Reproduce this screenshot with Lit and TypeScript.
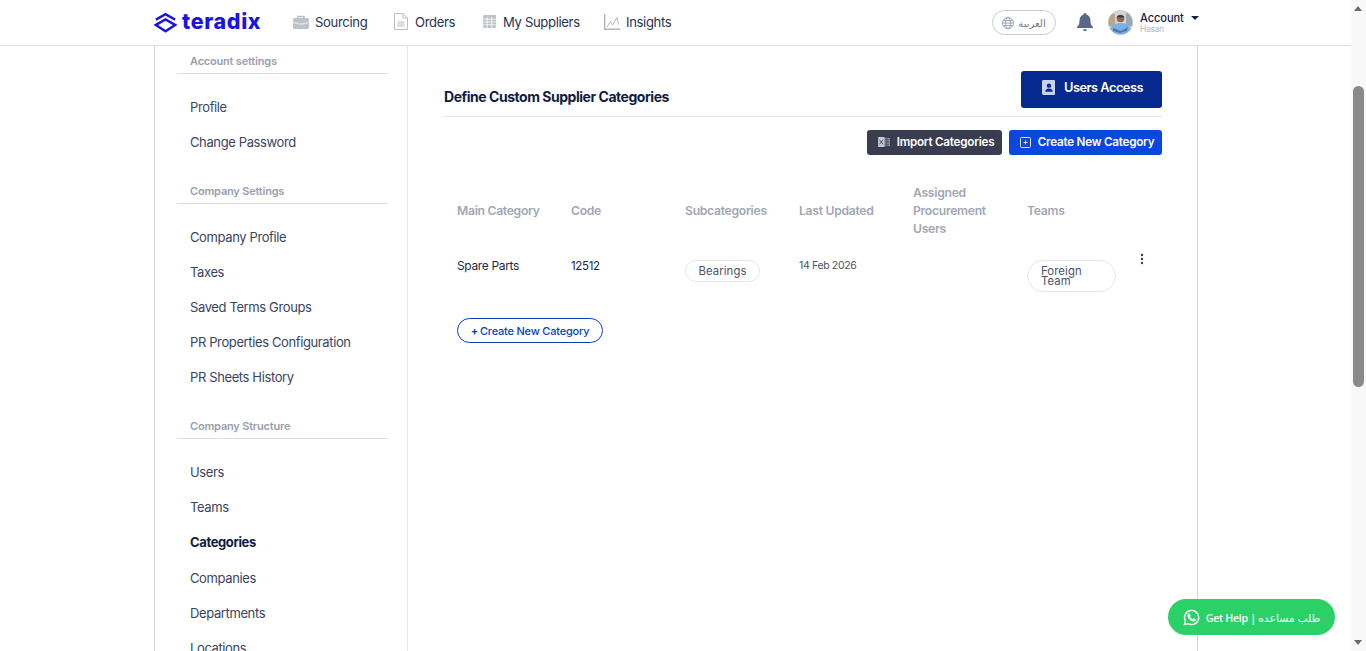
import { LitElement, html, css } from "lit";
import { customElement } from "lit/decorators.js";

const sections = [
  { title: "Account settings", items: ["Profile", "Change Password"] },
  { title: "Company Settings", items: ["Company Profile", "Taxes", "Saved Terms Groups", "PR Properties Configuration", "PR Sheets History"] },
  { title: "Company Structure", items: ["Users", "Teams", "Categories", "Companies", "Departments", "Locations"] },
];

@customElement("app-root")
export class AppRoot extends LitElement {
  static styles = css`
    :host { display: flex; width: 1366px; height: 651px; overflow: hidden; background: #fff; font-family: "Inter", "Liberation Sans", sans-serif; color: #1e2a44; letter-spacing: -0.35px; position: relative; }
    .page { width: 1351px; display: flex; flex-direction: column; height: 651px; }
    .sb { width: 15px; background: #f8f8f8; position: relative; }
    .thumb { position: absolute; left: 2px; width: 11px; top: 86px; height: 301px; background: #8a8a8a; border-radius: 6px; }
    .arr { position: absolute; left: 3px; width: 0; height: 0; border-left: 4.5px solid transparent; border-right: 4.5px solid transparent; }
    .arr.up { top: 6px; border-bottom: 5px solid #6b6b6b; }
    .arr.down { bottom: 6px; border-top: 5px solid #6b6b6b; }

    header { height: 45px; flex: none; border-bottom: 1px solid #dcdde0; display: flex; align-items: center; padding-left: 154px; }
    .logo { display: flex; align-items: center; gap: 5px; width: 139px; color: #1a14e0; }
    .logo span { font-size: 21.5px; font-weight: 800; letter-spacing: 0.65px; line-height: 1; margin-top: -1px; }
    .nav { display: flex; align-items: center; font-size: 13.1px; color: #2a3550; padding-bottom: 2px; }
    .nav a { display: flex; align-items: center; gap: 7px; }
    .nav a:nth-child(1) { width: 101px; gap: 6px; }
    .nav a:nth-child(2) { width: 89px; }
    .nav a:nth-child(3) { width: 121px; }
    .nav a:nth-child(4) { gap: 6px; }
    .right { margin-left: auto; margin-right: 153px; display: flex; align-items: center; }
    .lang { width: 62px; height: 23px; border: 1px solid #c9ccd3; border-radius: 13px; display: flex; align-items: center; justify-content: center; gap: 4px; font-size: 10px; color: #6f7686; margin-right: 21px; }
    .ar { font-family: "Noto Sans", "DejaVu Sans", sans-serif; }
    .bell { margin-right: 15px; display: flex; }
    .avatar { margin-right: 7px; display: flex; }
    .acct { display: flex; flex-direction: column; line-height: 1; width: 58px; padding-top: 2px; }
    .acct b { font-weight: 500; font-size: 11.1px; color: #16213f; display: flex; align-items: center; gap: 7px; letter-spacing: -0.1px; }
    .acct b i { width: 0; height: 0; border-left: 4px solid transparent; border-right: 4px solid transparent; border-top: 4px solid #16213f; margin-top: -2px; }
    .acct small { font-size: 8.5px; color: #b4b8c2; margin-top: 1px; }

    .wrap { flex: 1; min-height: 0; margin-left: 154px; width: 1044px; box-sizing: border-box; border-left: 1px solid #cfd1d5; border-right: 1px solid #cfd1d5; display: flex; overflow: hidden; }
    aside { width: 253px; flex: none; border-right: 1px solid #e6e7ea; box-sizing: border-box; padding: 8px 19px 0 22px; }
    .sec { margin-bottom: 23.6px; }
    .sec h4 { margin: 0; font-size: 11px; font-weight: 600; color: #9aa0ae; padding-left: 13px; height: 19px; line-height: 14px; border-bottom: 1px solid #d9dbdf; letter-spacing: -0.2px; }
    .sec ul { list-style: none; margin: 16px 0 0; padding: 0 0 0 13px; }
    .sec li { height: 35.1px; line-height: 35px; font-size: 13px; color: #3a4560; white-space: nowrap; letter-spacing: -0.38px; }
    .sec:last-child li { height: 35.3px; }
    .sec li.on { font-weight: 700; color: #111c3f; }

    main { flex: 1; padding: 25px 35px 0 36px; min-width: 0; }
    .top { display: flex; align-items: center; justify-content: space-between; border-bottom: 1px solid #e6e7ea; padding-bottom: 8px; height: 37px; }
    .top h2 { margin: 14px 0 0; font-size: 14px; font-weight: 700; color: #111c3f; letter-spacing: -0.47px; }
    .btn { display: flex; align-items: center; justify-content: center; color: #fff; border-radius: 3px; font-weight: 600; }
    .ua { width: 141px; height: 37px; background: #05298f; font-size: 12.8px; gap: 9px; letter-spacing: -0.5px; padding: 0 0 4px 2px; box-sizing: border-box; }
    .actions { display: flex; justify-content: flex-end; gap: 7px; margin-top: 13px; }
    .actions .btn { height: 25px; font-size: 11.7px; gap: 7px; letter-spacing: -0.25px; padding: 0 0 1px 3px; box-sizing: border-box; }
    .imp { width: 135px; background: #3a3c50; }
    .cre { width: 153px; background: #0a47dc; }

    .table { padding-left: 13px; margin-top: 28px; }
    .row { display: grid; grid-template-columns: repeat(6, 114px); }
    .head { font-size: 12.2px; font-weight: 600; color: #a2a7b4; line-height: 18px; align-items: center; height: 56px; letter-spacing: -0.3px; }
    .head > div { padding-right: 24px; white-space: normal; }
    .head > div:nth-child(-n+4) { padding-right: 0; white-space: nowrap; }
    .body { height: 79px; position: relative; font-size: 12px; padding-top: 19px; box-sizing: border-box; color: #1e2a44; }
    .body > div { line-height: 16px; }
    .code { font-size: 11.5px; }
    .d { font-size: 10.5px; color: #4a5268; }
    .pill { display: inline-flex; align-items: center; border: 1px solid #e3e6ea; border-radius: 16px; color: #4a5268; font-size: 11.3px; letter-spacing: 0.1px; box-sizing: border-box; }
    .p1 { width: 75px; height: 22px; justify-content: center; margin-top: 2px; }
    .p2 { width: 89px; height: 32px; padding-left: 13px; line-height: 10px; margin-top: 2px; }
    .kebab { position: absolute; left: 683px; top: 14px; display: flex; }
    .add { width: 146px; height: 25px; box-sizing: border-box; border: 1px solid #0a3fb8; border-radius: 13px; color: #0a3fb8; font-size: 11px; font-weight: 500; display: flex; align-items: center; justify-content: center; gap: 2px; letter-spacing: -0.2px; }

    .wa { position: absolute; left: 1168px; top: 599px; width: 167px; height: 36px; background: #2bd066; border-radius: 18px; color: #fff; display: flex; align-items: center; justify-content: center; gap: 6px; font-size: 10.7px; font-weight: 600; font-family: "Open Sans", "Noto Sans", sans-serif; letter-spacing: -0.35px; }
    .wa .ar { font-size: 10.8px; font-weight: 500; letter-spacing: 0; }
  `;

  render() {
    return html`
      <div class="page">
        <header>
          <div class="logo">
            <svg width="23" height="22" viewBox="0 0 24 22" fill="none" stroke="#1a14e0" stroke-width="2.6"><path d="M2 7.5 L12 1.8 L22 7.5" /><path d="M2 13 L12 7.3 L22 13 L12 19.6 Z" /></svg>
            <span>teradix</span>
          </div>
          <nav class="nav">
            <a><svg width="16" height="14" viewBox="0 0 16 14"><path d="M5 3V1.500h6V3" fill="none" stroke="#b5bac4" stroke-width="1.400"/><rect x="0" y="3" width="16" height="11" rx="1.500" fill="#bcc1ca"/><path d="M0 6.500q8 3.500 16 0v1.500q-8 3.500-16 0z" fill="#dfe1e6"/></svg>Sourcing</a>
            <a><svg width="14" height="17" viewBox="0 0 14 17" fill="none" stroke="#b9bdc6" stroke-width="1"><path d="M.5.5h8.500l4.500 4.500v11.500h-13z"/><path d="M9 .5v4.500h4.500M3.500 9h7M3.500 11h7M3.500 13h7"/></svg>Orders</a>
            <a><svg width="13" height="13" viewBox="0 0 14 14"><rect width="14" height="14" rx="1.500" fill="#bcc1ca"/><path d="M0 4.500h14M0 7.500h14M0 10.500h14M4.500 2v12M9.500 2v12" stroke="#fff" stroke-width=".8"/></svg>My Suppliers</a>
            <a><svg width="16" height="16" viewBox="0 0 16 16" fill="none" stroke="#b0b4be"><path d="M.7 0v15.300H16" stroke-width="1.400"/><path d="M3 13l3.500-5.500 2 3.500L13 3.500l1.500 7" stroke-width="1"/></svg>Insights</a>
          </nav>
          <div class="right">
            <div class="lang"><svg width="12" height="12" viewBox="0 0 12 12" fill="none" stroke="#8d93a1" stroke-width=".8"><circle cx="6" cy="6" r="5.500"/><ellipse cx="6" cy="6" rx="2.500" ry="5.500"/><path d="M.5 6h11M1.200 3.500h9.600M1.200 8.500h9.600"/></svg><span class="ar">العربية</span></div>
            <div class="bell"><svg width="16" height="19" viewBox="0 0 16 19" fill="#5a6889"><path d="M8 0a1.300 1.300 0 0 1 1.300 1.500C12 2.200 13.500 4.500 13.500 7.500c0 3.500.8 5 2.500 6.500v1H0v-1c1.700-1.500 2.500-3 2.500-6.500C2.500 4.500 4 2.200 6.700 1.500A1.300 1.300 0 0 1 8 0z"/><path d="M6 16.300h4a2 2 0 0 1-4 0z"/></svg></div>
            <div class="avatar"><svg width="25" height="25" viewBox="0 0 25 25"><defs><clipPath id="av"><circle cx="12.500" cy="12.500" r="12"/></clipPath></defs><circle cx="12.500" cy="12.500" r="12.500" fill="#c8ccd4"/><g clip-path="url(#av)"><rect width="25" height="25" fill="#d8d2ca"/><rect x="0" y="4" width="7" height="12" fill="#b9a68f"/><rect x="18" y="3" width="7" height="13" fill="#9aa7b8"/><path d="M1 25c0-8 4-12 11.500-12S24 17 24 25z" fill="#7fb0e3"/><path d="M5 18l8 3 7-4-1 4-7 2-7-2z" fill="#4f79ad"/><circle cx="12.500" cy="8.500" r="3.800" fill="#8a6a55"/><path d="M8.700 7.500c0-3.500 7.600-3.500 7.600 0z" fill="#3f3a3a"/></g></svg></div>
            <div class="acct"><b>Account <i></i></b><small>Hasan</small></div>
          </div>
        </header>
        <div class="wrap">
          <aside>
            ${sections.map((s) => html`<div class="sec"><h4>${s.title}</h4><ul>${s.items.map((i) => html`<li class=${i === "Categories" ? "on" : ""}>${i}</li>`)}</ul></div>`)}
          </aside>
          <main>
            <div class="top">
              <h2>Define Custom Supplier Categories</h2>
              <div class="btn ua"><svg width="13" height="15" viewBox="0 0 14 16"><path fill="#c9d3ef" d="M1.500 0H13a1 1 0 0 1 1 1v14a1 1 0 0 1-1 1H1.500A1.500 1.500 0 0 1 0 14.500v-13A1.500 1.500 0 0 1 1.500 0z"/><circle cx="7.500" cy="6" r="2.400" fill="#05298f"/><path d="M3.500 12.500c0-2.500 2-3.500 4-3.500s4 1 4 3.500z" fill="#05298f"/></svg>Users Access</div>
            </div>
            <div class="actions">
              <div class="btn imp"><svg width="12" height="10" viewBox="0 0 13 11"><rect x="5" y="1" width="8" height="9" fill="#8b8d9a"/><path d="M7 3h5M7 5.500h5M7 8h5M9.500 1v9" stroke="#3a3c50" stroke-width=".7"/><rect width="7" height="11" fill="#c5c6ce"/><path d="M1.500 3l4 5M5.500 3l-4 5" stroke="#3a3c50" stroke-width=".9"/></svg>Import Categories</div>
              <div class="btn cre"><svg width="11" height="11" viewBox="0 0 11 11" fill="none" stroke="#d5e0fb"><rect x=".5" y=".5" width="10" height="10" rx="1"/><path d="M3.500 5.500h4M5.500 3.500v4"/></svg>Create New Category</div>
            </div>
            <div class="table">
              <div class="row head"><div>Main Category</div><div>Code</div><div>Subcategories</div><div>Last Updated</div><div>Assigned Procurement Users</div><div>Teams</div></div>
              <div class="row body">
                <div>Spare Parts</div><div class="code">12512</div><div><span class="pill p1">Bearings</span></div><div class="d">14 Feb 2026</div><div></div><div><span class="pill p2">Foreign<br />Team</span></div>
                <div class="kebab"><svg width="4" height="12" viewBox="0 0 4 12" fill="#3a3c50"><circle cx="2" cy="2" r="1.200"/><circle cx="2" cy="6" r="1.200"/><circle cx="2" cy="10" r="1.200"/></svg></div>
              </div>
              <div class="add"><b>+</b>Create New Category</div>
            </div>
          </main>
        </div>
      </div>
      <div class="sb"><div class="arr up"></div><div class="thumb"></div><div class="arr down"></div></div>
      <div class="wa"><svg width="17" height="17" viewBox="0 0 18 18" fill="none" stroke="#fff" stroke-width="1.500"><path d="M1.500 16.500l1.100-3.900A7.500 7.500 0 1 1 5.500 15.500z"/><path fill="#fff" stroke="none" d="M6.500 4.800c.4 0 .7.100.9.600l.6 1.400c.1.300 0 .5-.2.800l-.5.600c.7 1.200 1.600 2 2.900 2.700l.7-.8c.2-.2.500-.3.800-.2l1.400.7c.4.200.5.500.4.900-.2 1.100-1.200 1.800-2.300 1.700-3.200-.4-6-3-6.600-6.100-.2-1.100.6-2.300 1.900-2.300z"/></svg><span>Get Help | <span class="ar">طلب مساعده</span></span></div>
    `;
  }
}
